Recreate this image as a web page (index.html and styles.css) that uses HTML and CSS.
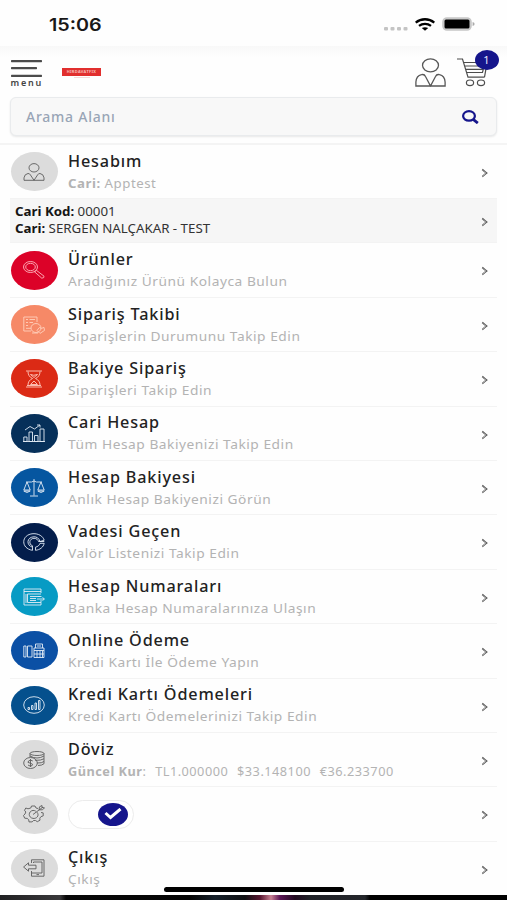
FILE: index.html
```html
<!DOCTYPE html>
<html lang="tr">
<head>
<meta charset="utf-8">
<title>Hesabım</title>
<link rel="stylesheet" href="styles.css">
</head>
<body>
<div class="statusbar">
  <span class="time">15:06</span>
  <div class="signals">
    <svg class="dots" width="24" height="4" viewBox="0 0 24 4" fill="#c4c4c4"><rect x="0" y="0" width="4" height="3.5" rx="1"/><rect x="6.5" y="0" width="4" height="3.5" rx="1"/><rect x="13" y="0" width="4" height="3.5" rx="1"/><rect x="19.5" y="0" width="4" height="3.5" rx="1"/></svg>
    <svg width="20" height="13" viewBox="0 0 20 13" fill="none" stroke="#000" stroke-width="2.3"><path d="M.7 4.6C6 .1 14 .1 19.3 4.6M4 7.9c3.500-2.700 8.500-2.700 12 0"/><path d="M6.800 10.100q3.200-1.800 6.400 0L10 12.700z" fill="#000" stroke="none"/></svg>
    <svg width="33" height="14" viewBox="0 0 33 14"><rect x="1" y="1" width="28" height="12" rx="4" fill="#d0d0d0" stroke="#c6c6c6" stroke-width="1.600"/><rect x="2.500" y="2.500" width="25" height="9" rx="1.500" fill="#000"/><path d="M30.600 5q2 .3 2 2t-2 2z" fill="#aaa"/></svg>
  </div>
</div>
<header>
  <div class="topbar">
    <div class="menu">
      <svg width="31" height="18" viewBox="0 0 31 18" fill="#4b4b4b"><rect y="0" width="31" height="2.200" rx=".6"/><rect y="7" width="26" height="2.200" rx=".6"/><rect y="14.700" width="31" height="2.200" rx=".6"/></svg>
      <span>menu</span>
    </div>
    <div class="brand"><b>HIRDAVATFIX</b><i></i></div>
    <div class="actions">
      <svg width="31" height="29" viewBox="0 0 31 29" fill="none" stroke="#575757" stroke-width="1.300"><ellipse cx="15.500" cy="7.300" rx="8" ry="6.500"/><path d="M.9 28V24Q1.300 17.800 6.500 16.700Q9.300 15.900 10.500 18.500L15.500 28L20.500 18.500Q21.700 15.900 24.500 16.700Q29.700 17.800 30.100 24V28z"/></svg>
      <div class="cart">
        <svg width="30" height="29" viewBox="0 0 30 29" fill="none" stroke="#4d4d4d" stroke-width="1.200"><path d="M0 1h5.500L11 19.200h16.500M6.500 4.500H28L25.500 14.500H9.500M7.600 8h19.500M8.700 11.300h17.500M27.500 19.200L30 5"/><ellipse cx="13" cy="24.800" rx="3.600" ry="2.800"/><ellipse cx="24" cy="24.800" rx="3.600" ry="2.800"/></svg>
        <span class="badge">1</span>
      </div>
    </div>
  </div>
  <div class="search">
    <span>Arama Alanı</span>
    <svg width="17" height="14" viewBox="0 0 17 14" fill="none" stroke="#15158c" stroke-width="2.200"><ellipse cx="7" cy="5.900" rx="5.900" ry="4.800"/><path d="M11.200 9.400l4.600 3.700" stroke-width="2.800"/></svg>
  </div>
</header>
<main>
  <a class="row account">
    <span class="icon gray"><svg viewBox="0 0 22 18"><ellipse cx="11" cy="4.800" rx="5" ry="4.200"/><path d="M1 17.300v-2.500q.5-3.800 4-4.300 1.600-.2 2.400 1.400L11 17.300l3.600-5.400q.8-1.600 2.400-1.400 3.500.5 4 4.300v2.500z"/></svg></span>
    <span class="text"><span class="title">Hesabım</span><span class="sub short"><b>Cari:</b> Apptest</span></span><i class="chev"></i>
  </a>
  <a class="row customer">
    <span class="text"><span><b>Cari Kod:</b> 00001</span><span><b>Cari:</b> SERGEN NALÇAKAR - TEST</span></span><i class="chev"></i>
  </a>
  <a class="row">
    <span class="icon red"><svg viewBox="0 0 22 18"><ellipse cx="7.500" cy="6" rx="7" ry="5.500"/><ellipse cx="7.500" cy="6" rx="4.800" ry="3.700"/><path d="M11.500 10.800l2-1.400 7.500 5.800q.5 1.800-2.200 2z"/></svg></span>
    <span class="text"><span class="title">Ürünler</span><span class="sub">Aradığınız Ürünü Kolayca Bulun</span></span><i class="chev"></i>
  </a>
  <a class="row">
    <span class="icon orange"><svg viewBox="0 0 22 18"><path d="M8 15H.8V1H14v5M3 3.500h2M6.500 3.500H12M3 6.500h2M6.500 6.500H10M3 9.500h2M3 12.300h5"/><ellipse cx="13" cy="12" rx="5" ry="4.500"/><path d="M9 17h6M17 17.400l-3-3 2.500-3 2 1 2.500-1 .5 3z"/></svg></span>
    <span class="text"><span class="title">Sipariş Takibi</span><span class="sub">Siparişlerin Durumunu Takip Edin</span></span><i class="chev"></i>
  </a>
  <a class="row">
    <span class="icon flame"><svg viewBox="0 0 22 18"><path d="M3 1h16M3 17h16M4 15.500h14M5 1.500q0 5 4.500 7Q5 10.500 5 15M17 1.500q0 5-4.500 7Q17 10.500 17 15M7.500 4.500q3 1.500 7 0L11 7.500zM7.500 14.500l3.500-3.500 3.500 3.500z"/></svg></span>
    <span class="text"><span class="title">Bakiye Sipariş</span><span class="sub">Siparişleri Takip Edin</span></span><i class="chev"></i>
  </a>
  <a class="row">
    <span class="icon navy"><svg viewBox="0 0 22 18"><path d="M.8 17.500V13H4v4.500zM6 17.500V8h3.500v9.500zM11.500 17.500v-6H15v6zM17 17.500V5h4v12.500zM2 6l5-3.500L11.500 5 17 1M14 1h3v2.500M0 17.500h22"/></svg></span>
    <span class="text"><span class="title">Cari Hesap</span><span class="sub">Tüm Hesap Bakiyenizi Takip Edin</span></span><i class="chev"></i>
  </a>
  <a class="row">
    <span class="icon blue"><svg viewBox="0 0 22 18"><path d="M11 0v16.500M7 17h8M3 3h5.500L11 2l2.500 1H19M4 3L.8 11h6.400zM18 3l-3.200 8h6.400zM.8 12q3.200 3 6.400 0zM14.800 12q3.200 3 6.400 0z"/></svg></span>
    <span class="text"><span class="title">Hesap Bakiyesi</span><span class="sub">Anlık Hesap Bakiyenizi Görün</span></span><i class="chev"></i>
  </a>
  <a class="row">
    <span class="icon midnight"><svg viewBox="0 0 22 18"><path d="M9.500 17.300C-2.500 15.500-2 1.500 10 .7c5.500-.3 10 2.500 11.200 6.500L17 8.500C16 5 13.500 3.800 11 3.800c-7.500.2-8 8.700-1.500 10.400zM12.500 17.300v-3.100c2.200-.5 3.800-1.800 4.500-3.900h4.200c-.9 4-4.200 6.500-8.700 7zM9.500 14.200v-1.400C5.500 11.500 6 5.500 11 5.300c2.500 0 4 1.500 4.500 3.200h5.800"/></svg></span>
    <span class="text"><span class="title">Vadesi Geçen</span><span class="sub">Valör Listenizi Takip Edin</span></span><i class="chev"></i>
  </a>
  <a class="row">
    <span class="icon cyan"><svg viewBox="0 0 22 18"><path d="M18 5V1H1v16h17v-2.500M1 3.500h17M4.500 6v8.500h13.500V12M4.500 6H18M7 8.500h10M7 10.500h6M7 12.500h6M3 6v9M15 8.500h3.500M14 11h7M19.500 9.500l2 1.500-2 1.500"/></svg></span>
    <span class="text"><span class="title">Hesap Numaraları</span><span class="sub">Banka Hesap Numaralarınıza Ulaşın</span></span><i class="chev"></i>
  </a>
  <a class="row">
    <span class="icon royal"><svg viewBox="0 0 22 18"><path d="M.8 4H3v11H.8zM4.500 4H9v11H4.500zM11 15.500V6h10v9.500zM12.500 6V2h7v4M14 4h4M11 8.500h10M14 8.500v7M17 8.500v7M11 12h10M19.500 8.500v7"/></svg></span>
    <span class="text"><span class="title">Online Ödeme</span><span class="sub">Kredi Kartı İle Ödeme Yapın</span></span><i class="chev"></i>
  </a>
  <a class="row">
    <span class="icon teal"><svg viewBox="0 0 22 18"><ellipse cx="11" cy="9" rx="10.300" ry="8.300"/><path d="M5 13.500v-2h1.500v2zM8.500 13.500v-4H10v4zM12 13.500V7h1.500v6.500zM15.500 13.500v-9H17v9z"/></svg></span>
    <span class="text"><span class="title">Kredi Kartı Ödemeleri</span><span class="sub">Kredi Kartı Ödemelerinizi Takip Edin</span></span><i class="chev"></i>
  </a>
  <a class="row">
    <span class="icon gray"><svg viewBox="0 0 22 18"><ellipse cx="14" cy="2.500" rx="7" ry="2"/><path d="M7 2.500V6M21 2.500v10.200q-2 1.800-6 1.800M7 5q7 4 14 0M12 9.300q6 .3 9-1.500M14 12q5 .2 7-1.500"/><ellipse cx="7.500" cy="12" rx="6.800" ry="5.500"/><path d="M9.800 10Q7.500 8.200 5.500 10t2 2.200q3.500 1 1.500 2.500-2 1-4-.7M7.500 8v8"/></svg></span>
    <span class="text"><span class="title">Döviz</span><span class="sub rates"><span><b>Güncel Kur</b>:</span><span>TL1.000000</span><span>$33.148100</span><span>€36.233700</span></span></span><i class="chev"></i>
  </a>
  <a class="row">
    <span class="icon gray"><svg viewBox="0 0 22 18"><path d="M15 3.500L13 3l-1-2H8.500L7.800 3 5 3.800 2.800 3 1.500 5.300 2.800 7 2 9l-1.500 1.500 1.200 2.700 2.500.2 1.500 1.300.3 2.200h3.200l1.300-1.400h2l1.800 1.200 2.700-1.500-.2-2 1.200-1.600 2.200-.7v-3L18 7.500"/><path d="M14 7.200c3 3.800-1 6.800-4 6.200-5-.8-5-7.200 0-8q1.700 0 2.800.8M10 9.500L20 2M16 4.800l.5-3L19 .5v2l2.500.3-2 2z"/></svg></span>
    <span class="switch"><span class="knob"><svg width="18" height="12" viewBox="0 0 18 12" fill="none" stroke="#fff" stroke-width="3"><path d="M1.500 5l5 4.500 10-8.500"/></svg></span></span><i class="chev"></i>
  </a>
  <a class="row">
    <span class="icon gray"><svg viewBox="0 0 22 18"><path d="M8.500 4V.8H21v16.400H8.500V12M10.500 4V3H19v11H8.500M13.500 15.600h2.500M5.500 3.800L.6 8l4.900 4.200V9.800H13V6.200H5.500z"/></svg></span>
    <span class="text"><span class="title">Çıkış</span><span class="sub">Çıkış</span></span><i class="chev"></i>
  </a>
</main>
<div class="home"></div>
<footer></footer>
</body>
</html>
```
FILE: styles.css
```css
* { box-sizing: border-box; }
body {
  margin: 0;
  width: 507px;
  height: 900px;
  overflow: hidden;
  display: flex;
  flex-direction: column;
  position: relative;
  background: #fefefe;
  font-family: "Noto Sans", sans-serif;
  color: #222;
}
.statusbar {
  height: 46px;
  flex: none;
  display: flex;
  justify-content: space-between;
  padding: 0 32px 0 49px;
}
.time {
  font: 600 17px/20px Inter, sans-serif;
  margin-top: 15px;
  transform: scaleX(1.16);
  transform-origin: left;
  color: #181818;
}
.signals { display: flex; align-items: center; gap: 7px; height: 14px; margin-top: 17px; }
.dots { margin-top: 9px; }
header {
  height: 99px;
  flex: none;
  padding: 11px 10px 0;
  border-bottom: 2px solid #f4f4f4;
  background: linear-gradient(#f8f8f8, #fefefe 12px);
}
.topbar { display: flex; height: 40px; }
.menu { width: 52px; padding: 3px 0 0 .5px; }
.menu svg { display: block; }
.menu span { display: block; font-size: 9px; line-height: 9px; font-weight: 600; letter-spacing: 1.8px; color: #444; }
.brand { width: 39px; margin-top: 11px; }
.brand b {
  display: block;
  height: 8px;
  background: #e12f2e;
  color: #f6b9b4;
  font-size: 4px;
  line-height: 7.500px;
  letter-spacing: .3px;
  text-align: center;
}
.brand i { display: block; width: 16px; height: 1px; margin: 1px auto; background: #f5dada; }
.actions { display: flex; gap: 11px; margin-left: auto; padding: 1px 10.500px 0 0; }
.cart { position: relative; width: 30px; }
.badge {
  position: absolute;
  left: 18px;
  top: -8px;
  width: 24px;
  height: 20px;
  border-radius: 50%;
  background: #15158c;
  color: #e8e8ff;
  font-size: 11px;
  line-height: 20px;
  text-align: center;
}
.search {
  height: 39px;
  display: flex;
  justify-content: space-between;
  align-items: center;
  padding: 0 17px 0 15px;
  border: 1px solid #e9ebed;
  border-radius: 6px;
  background: #f8f8f8;
  box-shadow: 0 1px 2px #e8e8e8;
  font-size: 14px;
  font-weight: 500;
  letter-spacing: .75px;
  color: #98a5b6;
}
main { padding: 0 10px; flex: none; }
.row {
  height: 54.4px;
  display: flex;
  align-items: center;
  border-bottom: 1px solid #f3f3f3;
}
.account { height: 54px; }
.customer { height: 43.500px; background: #f6f6f6; padding-left: 5px; margin-bottom: 1px; }
.icon {
  width: 47px;
  height: 39px;
  border-radius: 50%;
  display: flex;
  align-items: center;
  justify-content: center;
  margin-right: 10px;
  margin-left: .5px;
  color: #e2ebf5;
}
.icon svg { width: 22px; height: 18px; fill: none; stroke: currentColor; stroke-width: .9; stroke-linejoin: round; }
.gray { background: #dcdcdc; color: #5c5c5c; }
.red { background: #dc0228; color: #ffb7bd; }
.orange { background: #f68967; color: #ffd0bc; }
.flame { background: #db2a15; color: #ffc9be; }
.navy { background: #06305a; }
.blue { background: #0656a0; }
.midnight { background: #031d4b; }
.cyan { background: #079bc4; }
.royal { background: #0b50a5; }
.teal { background: #05508d; }
.text { display: flex; flex-direction: column; white-space: nowrap; }
.text > span { transform-origin: left; }
.title { font-size: 15.500px; line-height: 22px; font-weight: 500; letter-spacing: .8px; transform: scaleX(1.045); }
.sub { font-size: 13px; line-height: 22px; letter-spacing: .5px; color: #b3b3b3; transform: scaleX(1.057); }
.sub.short { transform: scaleX(1.02); }
.sub.rates { display: flex; gap: 9px; transform: scaleX(.98); }
.customer .text { font-size: 12px; line-height: 17.500px; color: #333; }
.customer .text > span { transform: scaleX(1.108); }
.customer b { color: #151515; }
.chev {
  width: 5.500px;
  height: 5.500px;
  margin: 2px 11.500px 0 auto;
  border: solid #5a5a5a;
  border-width: 1.500px 1.500px 0 0;
  transform: scaleX(1.15) rotate(45deg);
  box-shadow: inset -.5px .5px 0 #5a5a5a;
}
.switch {
  width: 66px;
  height: 29px;
  display: flex;
  align-items: center;
  justify-content: flex-end;
  padding-right: 5px;
  border: 1px solid #ececec;
  border-radius: 15px;
  background: #fff;
}
.knob { width: 30px; height: 23px; border-radius: 50%; background: #15158c; display: flex; align-items: center; justify-content: center; }
.home { position: absolute; left: 164px; top: 887px; width: 180px; height: 5px; border-radius: 3px; background: #000; }
footer {
  position: absolute;
  left: 0;
  right: 0;
  top: 895px;
  height: 5px;
  background: linear-gradient(90deg, #202022, #39383a 60px, #070707 66px, #050505 190px, #16202a 215px, #101012 245px, #57152f 260px, #c98092 271px, #5b1555 280px, #210a20 295px, #202227 310px, #24262b 365px, #000 370px);
}
```
